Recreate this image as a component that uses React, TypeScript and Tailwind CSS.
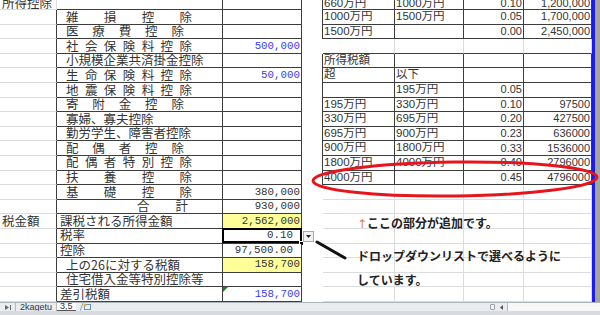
import React from "react";

// borders: table lines are dark, sheet gridlines are light, filled cells hide them
const B_DARK = "border-b-[#3d3d3d]";
const B_GRID = "border-b-[#dadcdd]";
const R_DARK = "border-r-[#3d3d3d]";
const R_GRID = "border-r-[#dadcdd]";
const R_NONE = "border-r-white";

type Val = { text: string; tone?: "blue" | "yellow" | "selected"; dec?: boolean; note?: boolean };

type Row = {
	a?: string;
	b?: React.ReactNode;
	c?: Val;
	e?: string;
	f?: string;
	g?: string;
	h?: string;
};

function Spread({ text, w }: { text: string; w: string }) {
	return (
		<span className={`ml-[9px] flex justify-between ${w}`}>
			{Array.from(text).map((ch, i) => (
				<span key={i}>{ch}</span>
			))}
		</span>
	);
}

const rows: Row[] = [
	{ a: "所得控除", e: "660万円", f: "1000万円", g: "0.10", h: "1,200,000" },
	{ b: <Spread text="雑損控除" w="w-[126px]" />, e: "1000万円", f: "1500万円", g: "0.05", h: "1,700,000" },
	{ b: <Spread text="医療費控除" w="w-[118px]" />, e: "1500万円", g: "0.00", h: "2,450,000" },
	{ b: <Spread text="社会保険料控除" w="w-[126px]" />, c: { text: "500,000", tone: "blue" } },
	{ b: <span className="ml-[9px]">小規模企業共済掛金控除</span>, e: "所得税額" },
	{ b: <Spread text="生命保険料控除" w="w-[126px]" />, c: { text: "50,000", tone: "blue" }, e: "超", f: "以下" },
	{ b: <Spread text="地震保険料控除" w="w-[126px]" />, f: "195万円", g: "0.05" },
	{ b: <Spread text="寄附金控除" w="w-[118px]" />, e: "195万円", f: "330万円", g: "0.10", h: "97500" },
	{ b: <span className="ml-[9px]">寡婦、寡夫控除</span>, e: "330万円", f: "695万円", g: "0.20", h: "427500" },
	{ b: <span className="ml-[9px]">勤労学生、障害者控除</span>, e: "695万円", f: "900万円", g: "0.23", h: "636000" },
	{ b: <Spread text="配偶者控除" w="w-[118px]" />, e: "900万円", f: "1800万円", g: "0.33", h: "1536000" },
	{ b: <Spread text="配偶者特別控除" w="w-[126px]" />, e: "1800万円", f: "4000万円", g: "0.40", h: "2796000" },
	{ b: <Spread text="扶養控除" w="w-[126px]" />, e: "4000万円", g: "0.45", h: "4796000" },
	{ b: <Spread text="基礎控除" w="w-[126px]" />, c: { text: "380,000" } },
	{
		b: (
			<span className="ml-[80px] flex w-[51px] justify-between">
				<span>合</span>
				<span>計</span>
			</span>
		),
		c: { text: "930,000" },
	},
	{ a: "税金額", b: <span className="ml-[3px]">課税される所得金額</span>, c: { text: "2,562,000", tone: "yellow" } },
	{ b: <span className="ml-[3px]">税率</span>, c: { text: "0.10", tone: "selected", dec: true } },
	{ b: <span className="ml-[3px]">控除</span>, c: { text: "97,500.00", dec: true } },
	{ b: <span className="ml-[9px]">上の26に対する税額</span>, c: { text: "158,700", tone: "yellow" } },
	{ b: <span className="ml-[9px]">住宅借入金等特別控除等</span> },
	{ b: <span className="ml-[3px]">差引税額</span>, c: { text: "158,700", tone: "blue", note: true } },
];

const inRightTable = (i: number) => i <= 2 || (i >= 4 && i <= 12);

function ValueCell({ v }: { v?: Val }) {
	return (
		<div
			className={`relative flex items-center justify-end border-r border-b ${B_DARK} ${R_DARK} font-['Liberation_Mono',monospace] text-[10.8px] leading-none whitespace-nowrap ${
				v?.tone === "yellow" ? "bg-[#ffff99]" : "bg-white"
			} ${v?.tone === "blue" ? "text-[#3b3bff]" : "text-[#333]"} ${v?.dec ? "pr-[8px]" : "pr-[1px]"}`}
		>
			{v?.text}
			{v?.note && (
				<svg className="absolute top-0 left-0" width="5" height="5" viewBox="0 0 5 5">
					<path d="M0 0H5L0 5Z" fill="#1a8a1a" />
				</svg>
			)}
			{v?.tone === "selected" && (
				<>
					<span className="pointer-events-none absolute -top-px -right-px bottom-0 -left-px border-2 border-black" />
					<span className="absolute -right-[3px] -bottom-[3px] h-[5px] w-[5px] border border-white bg-black" />
					<span className="absolute top-[2px] left-[80px] flex h-[11px] w-[11px] items-center justify-center border border-[#a8a8a8] bg-[#f2f2f2]">
						<svg width="5" height="3" viewBox="0 0 5 3">
							<path d="M0 0H5L2.5 3Z" fill="#222" />
						</svg>
					</span>
				</>
			)}
		</div>
	);
}

function Sheet() {
	return (
		<div className="grid grid-cols-[57px_166px_79px_21px_72px_69px_60px_68px] grid-rows-[10px_repeat(20,14.6px)] text-[#333]">
			{rows.map((row, i) => {
				const tb = inRightTable(i) || i === 3 ? B_DARK : B_GRID;
				const tr = inRightTable(i) ? R_DARK : R_GRID;
				const align = i === 0 ? "items-end" : "items-center";
				return (
					<React.Fragment key={i}>
						<div
							className={`flex ${align} overflow-hidden border-r border-b pl-[2px] font-['Noto_Sans_CJK_JP',sans-serif] text-[12.5px] leading-none whitespace-nowrap ${B_GRID} ${
								i === 0 ? R_GRID : R_DARK
							}`}
						>
							{row.a}
						</div>
						<div
							className={`flex ${align} overflow-hidden border-r border-b font-['Noto_Sans_CJK_JP',sans-serif] text-[12.5px] leading-none whitespace-nowrap ${B_DARK} ${R_DARK}`}
						>
							{row.b}
						</div>
						<ValueCell v={row.c} />
						<div className={`border-r ${inRightTable(i) ? R_DARK : R_NONE}`} />
						<div
							className={`flex ${align} overflow-hidden border-r border-b pl-[1px] font-['Liberation_Sans','Noto_Sans_CJK_JP',sans-serif] text-[11.5px] leading-none whitespace-nowrap ${tb} ${tr}`}
						>
							{row.e}
						</div>
						<div
							className={`flex ${align} overflow-hidden border-r border-b pl-[1px] font-['Liberation_Sans','Noto_Sans_CJK_JP',sans-serif] text-[11.5px] leading-none whitespace-nowrap ${tb} ${tr}`}
						>
							{row.f}
						</div>
						<div
							className={`flex ${align} justify-end overflow-hidden border-r border-b pr-[1px] font-['Liberation_Sans',sans-serif] text-[11px] leading-none whitespace-nowrap ${tb} ${tr}`}
						>
							{row.g}
						</div>
						<div
							className={`flex ${align} justify-end overflow-hidden border-r border-b pr-[1px] font-['Liberation_Sans',sans-serif] text-[11px] leading-none whitespace-nowrap ${tb} ${tr}`}
						>
							{row.h}
						</div>
					</React.Fragment>
				);
			})}
		</div>
	);
}

function TabBar() {
	return (
		<div className="flex h-[13px] flex-col">
			<div className="flex h-[9px] items-stretch border-t border-[#aeb4bb] bg-[#eaedf0] font-['Liberation_Sans',sans-serif] text-[9px] leading-none text-[#333]">
				<div className="flex w-[16px] items-center justify-center border-r border-[#b3b8be]">
					<svg width="6" height="5" viewBox="0 0 6 5">
						<path d="M0 0L4 2.5L0 5Z" fill="#666" />
						<rect x="5" y="0" width="1" height="5" fill="#666" />
					</svg>
				</div>
				<div className="flex items-center border-r border-[#b3b8be] px-[4px]">2kagetu</div>
				<div className="flex items-center border-b border-[#555] bg-white px-[3px]">3,5</div>
				<div className="flex items-center pl-[4px]">
					<svg width="12" height="8" viewBox="0 0 12 8">
						<path d="M0 8L3 0" stroke="#9aa3ad" strokeWidth="1" />
						<rect x="4.5" y="1.5" width="6" height="5" fill="#eaf3fb" stroke="#6b8fb5" />
						<circle cx="5" cy="2" r="1.6" fill="#f0b428" />
					</svg>
				</div>
				<div className="flex-1" />
				<div className="my-[1px] w-[5px] rounded-[1px] border border-[#9ca3ab] bg-[#f4f4f4]" />
				<div className="flex w-[12px] items-center justify-center">
					<svg width="3" height="5" viewBox="0 0 3 5">
						<path d="M3 0V5L0 2.5Z" fill="#555" />
					</svg>
				</div>
				<div className="w-[93px] border-l border-[#b5b9be] bg-[#f7f7f7]" />
			</div>
			<div className="h-[4px] bg-[#d7dbe0]" />
		</div>
	);
}

export default function App() {
	return (
		<div className="relative h-[315px] w-[600px] overflow-hidden bg-white">
			<div className="flex h-[302px]">
				<Sheet />
				<div className="w-[3px] bg-[#1c1cf0]" />
				<div className="flex-1 bg-[#a4a4a4]" />
			</div>
			<TabBar />

			{/* Annotation: red ring, pointer line, note text */}
			<svg className="pointer-events-none absolute top-0 left-0" width="600" height="315" viewBox="0 0 600 315">
				<ellipse
					cx="455"
					cy="179"
					rx="142"
					ry="17"
					transform="rotate(-0.7 455 179)"
					fill="none"
					stroke="#e8141c"
					strokeWidth="3"
				/>
				<line x1="317" y1="242" x2="345" y2="258" stroke="#111" strokeWidth="3" strokeLinecap="round" />
			</svg>
			<div className="absolute top-[214px] left-[357px] font-['Noto_Sans_CJK_JP',sans-serif] text-[12px] font-bold text-[#222]">
				<p className="leading-[18px]">
					<span className="font-['DejaVu_Sans',sans-serif] font-normal text-[#e07a4a]">↑</span>
					ここの部分が追加です。
				</p>
				<p className="mt-[11px] leading-[24px]">ドロップダウンリストで選べるように</p>
				<p className="leading-[24px]">しています。</p>
			</div>
		</div>
	);
}
